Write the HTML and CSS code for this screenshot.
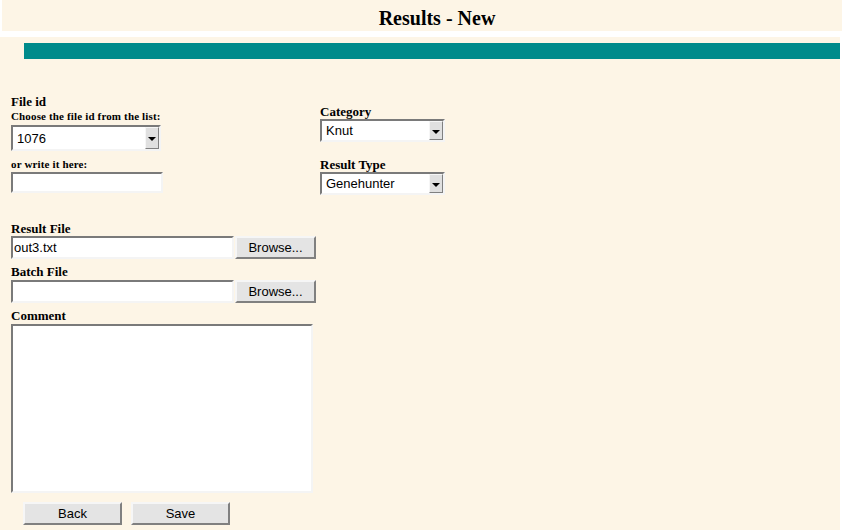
FILE: index.html
```html
<!DOCTYPE html>
<html>
<head>
<meta charset="utf-8">
<title>Results - New</title>
<link rel="stylesheet" href="styles.css">
</head>
<body>
<div class="header"><h1 class="title">Results - New</h1></div>
<div class="main">
  <div class="bar"></div>
  <form class="form">
    <div class="top">
      <div class="col-left">
        <div class="lbl">File id</div>
        <div class="lbl-small">Choose the file id from the list:</div>
        <div class="sel sel-id">
          <select><option>1076</option></select>
          <span class="arrow"></span>
        </div>
        <div class="lbl-small lbl-or">or write it here:</div>
        <input class="txt txt-id" type="text">
      </div>
      <div class="col-right">
        <div class="lbl lbl-cat">Category</div>
        <div class="sel sel-cat">
          <select><option>Knut</option></select>
          <span class="arrow"></span>
        </div>
        <div class="lbl lbl-type">Result Type</div>
        <div class="sel sel-cat">
          <select><option>Genehunter</option></select>
          <span class="arrow"></span>
        </div>
      </div>
    </div>
    <div class="lower">
      <div class="lbl">Result File</div>
      <div class="filerow">
        <input class="txt txt-file" type="text" value="out3.txt">
        <button type="button" class="btn btn-browse">Browse...</button>
      </div>
      <div class="lbl lbl-gap">Batch File</div>
      <div class="filerow">
        <input class="txt txt-file" type="text">
        <button type="button" class="btn btn-browse">Browse...</button>
      </div>
      <div class="lbl lbl-gap">Comment</div>
      <textarea class="comment"></textarea>
      <div class="actions">
        <button type="button" class="btn btn-act">Back</button>
        <button type="button" class="btn btn-act">Save</button>
      </div>
    </div>
  </form>
</div>
</body>
</html>
```
FILE: styles.css
```css
html, body {
  margin: 0;
  padding: 0;
  background: #ffffff;
}
body {
  width: 842px;
  height: 530px;
  overflow: hidden;
  font-family: "Liberation Serif", "Times New Roman", serif;
}
.header {
  margin-left: 2px;
  height: 31px;
  background: #fdf5e6;
}
.title {
  margin: 0;
  padding: 5px 0 0 30px;
  height: 26px;
  line-height: 26px;
  text-align: center;
  font-size: 20px;
  font-weight: bold;
  color: #000;
}
.main {
  margin-top: 6px;
  width: 840px;
  height: 493px;
  background: #fdf5e6;
  padding-top: 6px;
  box-sizing: border-box;
}
.bar {
  margin-left: 24px;
  height: 16px;
  background: #008b8b;
}
.form {
  margin: 0;
  padding: 35px 0 0 11px;
}
.top {
  display: flex;
}
.col-left {
  width: 309px;
}
.lbl {
  font-size: 13px;
  font-weight: bold;
  line-height: 15px;
  height: 15px;
  color: #000;
}
.lbl-small {
  font-size: 11px;
  font-weight: bold;
  line-height: 13px;
  height: 13px;
  margin-top: 1px;
  letter-spacing: 0.15px;
  color: #000;
}
.lbl-or {
  margin-top: 7px;
  margin-bottom: 1px;
}
.col-right {
  padding-top: 10px;
}
.lbl-type {
  margin-top: 15px;
}
.sel {
  position: relative;
}
.sel select {
  -webkit-appearance: none;
  appearance: none;
  display: block;
  box-sizing: border-box;
  width: 100%;
  height: 100%;
  margin: 0;
  padding: 0 0 0 4px;
  border: 2px solid;
  border-color: #7a7a7a #f4f4f4 #f4f4f4 #7a7a7a;
  border-radius: 0;
  background: #ffffff;
  font-family: "Liberation Sans", Arial, sans-serif;
  font-size: 13px;
  color: #000;
  outline: none;
}
.sel .arrow {
  position: absolute;
  top: 2px;
  right: 2px;
  bottom: 2px;
  width: 14px;
  box-sizing: border-box;
  background: #e0e0e0;
  border-right: 1px solid #808080;
  border-bottom: 1px solid #808080;
  border-top: 1px solid #f6f6f6;
  border-left: 1px solid #f6f6f6;
}
.sel .arrow::after {
  content: "";
  position: absolute;
  left: 2px;
  top: 50%;
  margin-top: -1px;
  border-left: 4px solid transparent;
  border-right: 4px solid transparent;
  border-top: 4px solid #000;
}
.sel-id {
  margin-top: 2px;
  width: 150px;
  height: 26px;
}
.sel-cat {
  width: 125px;
  height: 23px;
}
.txt {
  display: block;
  box-sizing: border-box;
  margin: 0;
  padding: 0 1px;
  border: 2px solid;
  border-color: #7a7a7a #f4f4f4 #f4f4f4 #7a7a7a;
  border-radius: 0;
  background: #ffffff;
  font-family: "Liberation Sans", Arial, sans-serif;
  font-size: 13px;
  color: #000;
  outline: none;
}
.txt-id {
  width: 152px;
  height: 21px;
}
.lower {
  margin-top: 26px;
}
.filerow {
  display: flex;
  gap: 1px;
  height: 23px;
}
.txt-file {
  width: 223px;
  height: 23px;
}
.lbl-gap {
  margin-top: 5px;
  margin-bottom: 1px;
}
.btn {
  box-sizing: border-box;
  margin: 0;
  padding: 0;
  border: 2px solid;
  border-color: #f6f6f6 #808080 #808080 #f6f6f6;
  border-radius: 0;
  background: #e4e4e4;
  font-family: "Liberation Sans", Arial, sans-serif;
  font-size: 13px;
  color: #000;
}
.btn-browse {
  width: 81px;
  height: 23px;
}
.comment {
  display: block;
  box-sizing: border-box;
  width: 302px;
  height: 169px;
  margin: 0;
  border: 2px solid;
  border-color: #7a7a7a #f4f4f4 #f4f4f4 #7a7a7a;
  border-radius: 0;
  background: #ffffff;
  resize: none;
  outline: none;
}
.actions {
  display: flex;
  gap: 9px;
  margin-top: 9px;
  padding-left: 12px;
}
.btn-act {
  width: 99px;
  height: 23px;
}
```
